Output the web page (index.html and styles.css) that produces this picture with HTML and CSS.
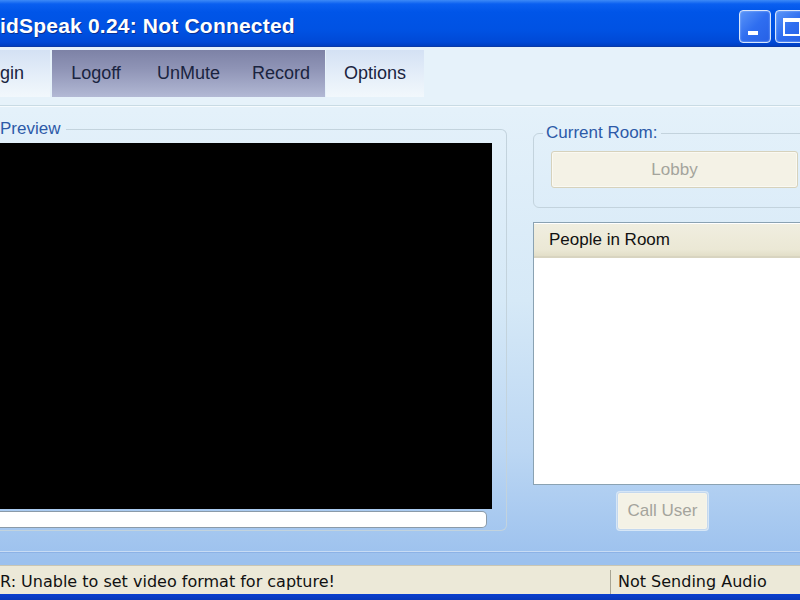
FILE: index.html
```html
<!DOCTYPE html>
<html>
<head>
<meta charset="utf-8">
<link rel="stylesheet" href="styles.css">
</head>
<body>
<div class="window">
  <div class="titlebar">
    <div class="title">idSpeak 0.24: Not Connected</div>
    <div class="caption-buttons">
      <div class="cbtn cbtn-min"><span class="min-bar"></span></div>
      <div class="cbtn cbtn-max"><span class="max-box"></span></div>
    </div>
  </div>
  <div class="toolbar">
    <div class="tb-btn tb-light tb-first">gin</div>
    <div class="tb-group">
      <div class="tb-btn w88">Logoff</div>
      <div class="tb-btn w97">UnMute</div>
      <div class="tb-btn w88">Record</div>
    </div>
    <div class="tb-btn tb-light w98">Options</div>
  </div>
  <div class="main">
    <fieldset class="group preview">
      <legend class="legend legend-preview">Preview</legend>
      <div class="video"></div>
      <div class="progress"></div>
    </fieldset>
    <div class="right">
      <fieldset class="group room">
        <legend class="legend legend-room">Current Room:</legend>
        <div class="xp-btn lobby">Lobby</div>
      </fieldset>
      <div class="listview">
        <div class="lv-header">People in Room</div>
        <div class="lv-body"></div>
      </div>
      <div class="call-row">
        <div class="xp-btn call">Call User</div>
      </div>
    </div>
  </div>
  <div class="sep"></div>
  <div class="statusbar">
    <div class="status-left">R: Unable to set video format for capture!</div>
    <div class="status-right">Not Sending Audio</div>
  </div>
  <div class="bottom-border"></div>
</div>
</body>
</html>
```
FILE: styles.css
```css
html, body {
  margin: 0;
  padding: 0;
}
body {
  width: 800px;
  height: 600px;
  overflow: hidden;
  font-family: "Liberation Sans", Arial, sans-serif;
}
.window {
  width: 800px;
  height: 600px;
  display: flex;
  flex-direction: column;
  background: linear-gradient(to bottom, #e7f3fa 0px, #e4f1fa 110px, #d6e9f7 300px, #bcd7f3 450px, #9cc1ee 560px);
  overflow: hidden;
}
.titlebar {
  height: 46px;
  flex: none;
  display: flex;
  align-items: center;
  justify-content: space-between;
  background: linear-gradient(to bottom, #3d8af7 0px, #0a5ff0 4px, #0055e8 12px, #0052e3 30px, #0049d6 42px, #003fc0 46px);
  border-bottom: 1px solid #0a3aa8;
}
.title {
  color: #ffffff;
  font-family: "Liberation Sans", Arial, sans-serif;
  font-weight: bold;
  font-size: 21px;
  letter-spacing: 0.2px;
  padding-left: 0;
  margin-top: 6px;
  text-shadow: 1px 1px 0 #0a2f90;
  white-space: nowrap;
}
.caption-buttons {
  display: flex;
  gap: 4px;
  margin-right: -7px;
  margin-top: 6px;
}
.cbtn {
  width: 30px;
  height: 31px;
  border: 1px solid #d8e6fc;
  border-radius: 4px;
  background: linear-gradient(135deg, #5a95f8 0%, #2f6ef0 50%, #2660e6 100%);
  box-shadow: inset 0 0 2px #a8c8ff;
  position: relative;
}
.min-bar {
  position: absolute;
  left: 8px;
  bottom: 7px;
  width: 10px;
  height: 4px;
  background: #ffffff;
}
.max-box {
  position: absolute;
  left: 7px;
  top: 7px;
  width: 14px;
  height: 12px;
  border: 2px solid #ffffff;
  border-top-width: 4px;
}
.toolbar {
  height: 59px;
  flex: none;
  display: flex;
  align-items: flex-start;
  padding-top: 3px;
  box-sizing: border-box;
  background: #e6f2fa;
  border-bottom: 1px solid #c9dbe4;
  box-shadow: 0 1px 0 #f6fbfe;
  font-size: 18px;
  color: #1a2440;
}
.tb-btn {
  height: 47px;
  display: flex;
  align-items: center;
  justify-content: center;
}
.tb-first {
  width: 50px;
  justify-content: flex-start;
  margin-right: 2px;
}
.tb-light {
  background: linear-gradient(to bottom, #d4e1f4 0%, #e2ecf8 45%, #f2f8fc 100%);
}
.w88 { width: 88px; }
.w97 { width: 97px; }
.w98 { width: 98px; margin-left: 1px; }
.tb-group {
  display: flex;
  height: 47px;
  background: linear-gradient(to bottom, #7d82a6 0%, #8f94b6 40%, #a6acca 80%, #b3b9d5 100%);
}
.main {
  height: 445px;
  flex: none;
  display: flex;
  padding-top: 13px;
  box-sizing: border-box;
  gap: 26px;
}
.group {
  margin: 0;
  border: 1px solid #c3d3dd;
  border-radius: 6px;
  min-width: 0;
}
.legend {
  font-size: 17px;
  line-height: 20px;
  color: #2d5aa8;
  padding: 0 6px 0 0;
}
.preview {
  width: 493px;
  height: 406px;
  flex: none;
  border-left: none;
  border-top-left-radius: 0;
  border-bottom-left-radius: 0;
  padding: 0 13px 4px 0;
  display: flex;
  flex-direction: column;
}
.video {
  height: 366px;
  margin-top: 4px;
  background: #000000;
  width: 492px;
  flex: none;
}
.progress {
  margin-top: 2px;
  width: 486px;
  height: 15px;
  flex: none;
  background: #ffffff;
  border: 1px solid #8a9aa8;
  border-left: none;
  border-radius: 0 5px 5px 0;
}
.right {
  flex: none;
  width: 290px;
  display: flex;
  flex-direction: column;
}
.room {
  padding: 8px 0 19px 17px;
  margin-top: 4px;
}
.legend-room {
  margin-left: -8px;
  padding: 0 4px 0 3px;
}
.xp-btn {
  background: #f4f2e6;
  border: 1px solid #d6d2bc;
  border-radius: 3px;
  color: #a4a49c;
  font-size: 17px;
  display: flex;
  align-items: center;
  justify-content: center;
  box-shadow: inset 0 0 0 1px #faf9f2;
}
.lobby {
  width: 245px;
  height: 35px;
}
.listview {
  margin-top: 14px;
  width: 290px;
  height: 261px;
  flex: none;
  background: #ffffff;
  border: 1px solid #8aa2b2;
  display: flex;
  flex-direction: column;
}
.lv-header {
  height: 32px;
  flex: none;
  background: linear-gradient(to bottom, #f0eee0 0%, #ebe8d5 80%, #e2dec8 100%);
  border-bottom: 2px solid #d8d4c0;
  margin-top: 1px;
  font-size: 17px;
  color: #111111;
  display: flex;
  align-items: center;
  padding-left: 15px;
}
.lv-body {
  flex: 1;
}
.call-row {
  display: flex;
  padding-left: 84px;
  margin-top: 7px;
}
.call {
  width: 89px;
  height: 36px;
  border-color: #c4d8ee;
  box-shadow: 0 0 0 1px #d6e6f6, inset 0 0 0 1px #f6f4ea;
}
.sep {
  height: 1px;
  flex: none;
  background: #c8dcf4;
  border-bottom: 1px solid #8cb2e6;
  margin-bottom: 12px;
}
.statusbar {
  height: 28px;
  flex: none;
  display: flex;
  align-items: center;
  background: #ece9d8;
  border-top: 1px solid #c9c6b4;
  font-family: "DejaVu Sans", Verdana, sans-serif;
  font-size: 16px;
  color: #111111;
}
.status-left {
  width: 610px;
  flex: none;
  white-space: nowrap;
  overflow: hidden;
  border-right: 1px solid #a8a594;
  height: 24px;
  line-height: 24px;
  margin-top: 4px;
}
.status-right {
  padding-left: 7px;
  height: 24px;
  line-height: 24px;
  margin-top: 4px;
  white-space: nowrap;
}
.bottom-border {
  height: 6px;
  flex: none;
  background: linear-gradient(to bottom, #0a3fcf, #0838b8);
}
```
